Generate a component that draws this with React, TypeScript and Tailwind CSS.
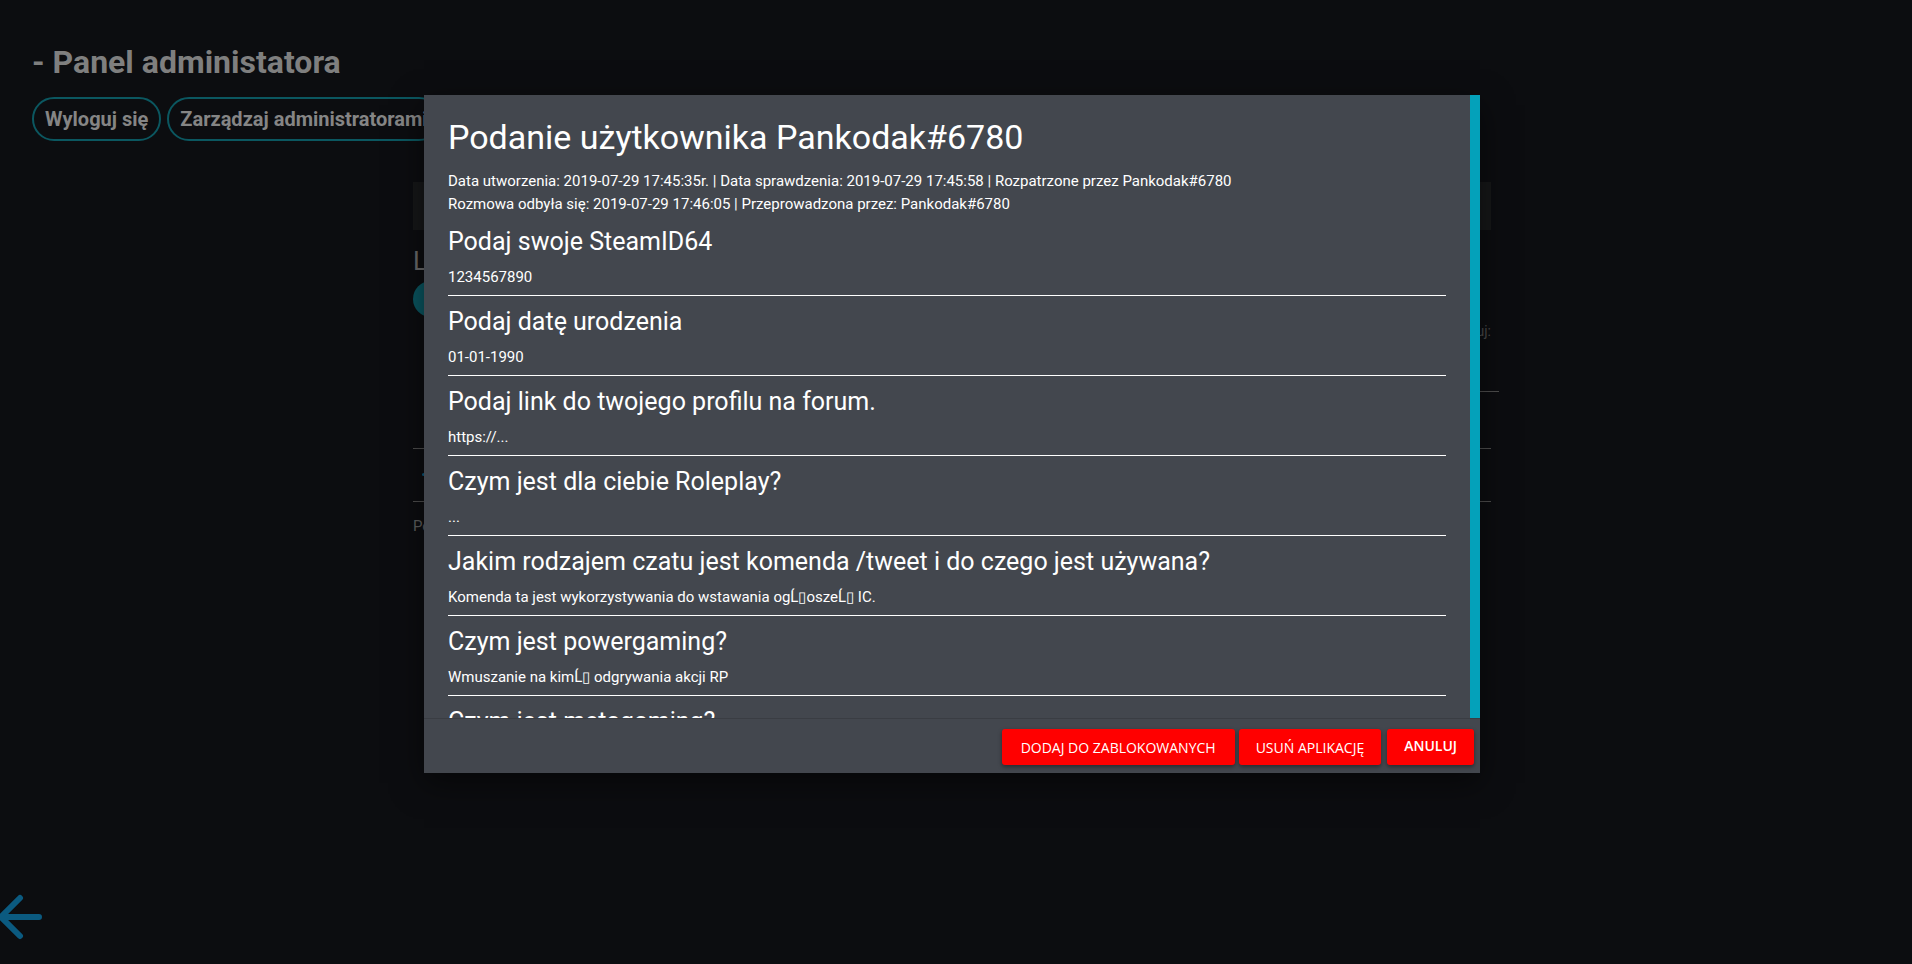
import React from "react";

const questions: { q: string; a: string }[] = [
  { q: "Podaj swoje SteamID64", a: "1234567890" },
  { q: "Podaj datę urodzenia", a: "01-01-1990" },
  { q: "Podaj link do twojego profilu na forum.", a: "https://..." },
  { q: "Czym jest dla ciebie Roleplay?", a: "..." },
  {
    q: "Jakim rodzajem czatu jest komenda /tweet i do czego jest używana?",
    a: "Komenda ta jest wykorzystywania do wstawania ogĹ\u25AFoszeĹ\u25AF IC.",
  },
  { q: "Czym jest powergaming?", a: "Wmuszanie na kimĹ\u25AF odgrywania akcji RP" },
  { q: "Czym jest metagaming?", a: "Wykorzystywanie informacji OOC w IC" },
];

export default function App() {
  return (
    <div className="relative h-[964px] w-full overflow-hidden bg-[#0c0d10] font-['Roboto',sans-serif]">
      {/* Background page */}
      <div className="pl-[32px] pt-[43px]">
        <h1 className="text-[32px] font-bold leading-[38px] text-[#7f7f7f]">- Panel administatora</h1>
        <div className="mt-[16px] flex gap-[6px]">
          <button className="h-[44px] rounded-full border-2 border-[#0b5760] px-[11px] text-[20px] font-bold text-[#858585]">
            Wyloguj się
          </button>
          <button className="h-[44px] rounded-full border-2 border-[#0b5760] px-[11px] text-[20px] font-bold text-[#858585]">
            Zarządzaj administratorami
          </button>
        </div>
      </div>

      <div className="ml-[413px] mt-[41px] w-[1078px]">
        <div className="h-[48px] bg-[#161718]" />
        <div className="mt-[18px] text-[26px] leading-[26px] text-[#6b6b6b]">Lista podań</div>
        <div className="mt-[7px] flex items-start justify-between">
          <div className="h-[36px] w-[36px] rounded-full bg-[#0a5560]" />
          <div className="mt-[40px] text-[14px] text-[#4a4a4a]">Sortuj:</div>
        </div>
        <div className="mt-[49px] ml-auto h-px w-[700px] translate-x-[8px] bg-[#4d4d4d]" />
        <div className="mt-[56px] h-px w-full bg-[#4d4d4d]" />
        <div className="mt-[24px] ml-[9px] h-[3px] w-[3px] rounded-full bg-[#0b5a80]" />
        <div className="mt-[25px] h-px w-full bg-[#4d4d4d]" />
        <div className="mt-[13px] text-[15px] text-[#5e5e5e]">Pokaż</div>
      </div>

      {/* Back arrow */}
      <svg className="absolute left-0 top-[880px]" width="50" height="60" viewBox="0 0 50 60" fill="none">
        <path
          d="M39 37 H2 M20 18 L1 37 L20 56"
          stroke="#0b5a80"
          strokeWidth="6"
          strokeLinecap="round"
          strokeLinejoin="round"
        />
      </svg>

      {/* Modal */}
      <div className="absolute left-[424px] top-[95px] flex h-[678px] w-[1056px] flex-col bg-[#43474e] shadow-[0_10px_30px_rgba(0,0,0,0.5)]">
        <div className="flex min-h-0 flex-1">
          <div className="min-w-0 flex-1 overflow-hidden px-[24px] pt-[22px] text-white">
            <h2 className="text-[34px] font-normal leading-[40px]">Podanie użytkownika Pankodak#6780</h2>
            <div className="mt-[13px] text-[15px] leading-[23px]">
              <div>
                Data utworzenia: 2019-07-29 17:45:35r. | Data sprawdzenia: 2019-07-29 17:45:58 | Rozpatrzone przez
                Pankodak#6780
              </div>
              <div>Rozmowa odbyła się: 2019-07-29 17:46:05 | Przeprowadzona przez: Pankodak#6780</div>
            </div>
            <div>
              {questions.map((item, i) => (
                <div key={i} className="border-b border-white pb-[7px] pt-[10px]">
                  <div className="text-[25px] leading-[32px]">{item.q}</div>
                  <div className="mt-[8px] text-[15px] leading-[22px]">{item.a}</div>
                </div>
              ))}
            </div>
          </div>
          <div className="w-[10px] bg-[#04a1ba]" />
        </div>
        <div className="flex h-[55px] items-start justify-end border-t border-[#3a3d43] pr-[6px] pt-[10px] font-['Open_Sans',sans-serif]">
          <button className="h-[36px] rounded-[3px] bg-[#ff0000] px-[19px] text-[14px] uppercase text-white shadow-[0_2px_4px_rgba(0,0,0,0.4)]">
            Dodaj do zablokowanych
          </button>
          <button className="ml-[4px] h-[36px] rounded-[3px] bg-[#ff0000] px-[17px] text-[14px] uppercase text-white shadow-[0_2px_4px_rgba(0,0,0,0.4)]">
            Usuń aplikację
          </button>
          <button className="ml-[6px] h-[36px] rounded-[3px] bg-[#ff0000] px-[17px] pb-[4px] text-[14px] font-semibold uppercase text-white shadow-[0_2px_4px_rgba(0,0,0,0.4)]">
            Anuluj
          </button>
        </div>
      </div>
    </div>
  );
}
